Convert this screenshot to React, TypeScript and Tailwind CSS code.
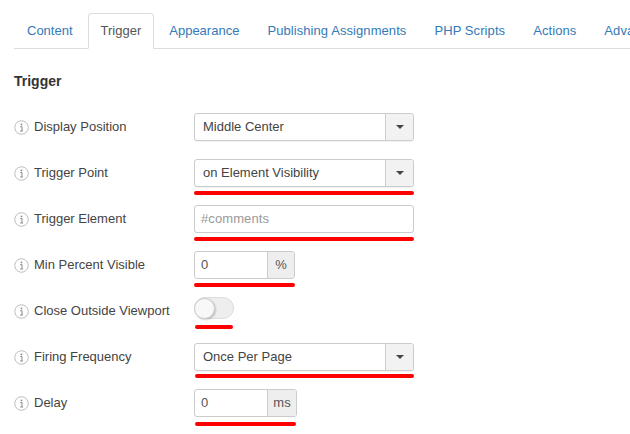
import type { ReactNode } from 'react';

const tabs = ['Content', 'Trigger', 'Appearance', 'Publishing Assignments', 'PHP Scripts', 'Actions', 'Advanced'];

function InfoIcon() {
    return (
        <svg width="15" height="15" viewBox="0 0 15 15" className="shrink-0 mt-[1px]">
            <circle cx="7.5" cy="7.5" r="6.75" fill="none" stroke="#bdbdbd" strokeWidth="1" />
            <circle cx="7.5" cy="4.4" r="0.9" fill="#8a8a8a" />
            <path d="M6.2 6.6 H8 V10.8 M6.1 11 H9" fill="none" stroke="#8a8a8a" strokeWidth="1" />
        </svg>
    );
}

function Row({ label, lineClass, children }: { label: string; lineClass: string; children: ReactNode }) {
    return (
        <div className="flex h-[46px]">
            <div className="w-[180px] h-[28px] flex items-center gap-[5px] text-[13px] text-[#444]">
                <InfoIcon />
                <span>{label}</span>
            </div>
            <div className="flex flex-col">
                {children}
                <div className={`mt-[4px] h-[4px] rounded-[2px] bg-[#fe0000] ${lineClass}`} />
            </div>
        </div>
    );
}

function SelectBox({ value }: { value: string }) {
    return (
        <div className="w-[220px] h-[28px] flex border border-[#ccc] rounded-[3px] bg-white text-[13px] text-[#444] shadow-[0_1px_1px_rgba(0,0,0,0.06)]">
            <div className="flex-1 flex items-center pl-[8px]">{value}</div>
            <div className="w-[28px] flex items-center justify-center bg-[#f2f2f2] border-l border-[#ccc] rounded-r-[3px]">
                <div className="w-0 h-0 border-x-[4px] border-x-transparent border-t-[4px] border-t-[#444]" />
            </div>
        </div>
    );
}

function AddonInput({ value, unit, unitClass }: { value: string; unit: string; unitClass: string }) {
    return (
        <div className="h-[28px] flex border border-[#ccc] rounded-[3px] bg-white text-[13px] text-[#555]">
            <div className="w-[72px] flex items-center pl-[6px]">{value}</div>
            <div className={`flex items-center justify-center bg-[#eee] border-l border-[#ccc] rounded-r-[3px] ${unitClass}`}>{unit}</div>
        </div>
    );
}

export default function App() {
    return (
        <div className="w-[630px] h-[434px] overflow-hidden bg-white font-['Liberation_Sans',Arial,sans-serif]">
            <div className="pt-[13px] px-[14px]">
                {/* Tabs */}
                <div className="flex gap-[2px] h-[36px] border-b border-[#ddd] w-[616px] text-[13px] whitespace-nowrap">
                    {tabs.map((tab, idx) => (
                        tab === 'Trigger' ? (
                            <div key={tab} className="h-[36px] px-[12px] flex items-center border border-[#ddd] border-b-white rounded-t-[4px] bg-white text-[#555]">
                                {tab}
                            </div>
                        ) : (
                            <div key={tab} className={`h-[35px] px-[13px] flex items-center text-[#337ab7] ${idx > 2 ? 'tracking-[0.08px]' : ''}`}>
                                {tab}
                            </div>
                        )
                    ))}
                </div>

                <h3 className="mt-[23px] h-[18px] leading-[18px] text-[14px] font-bold text-[#333]">Trigger</h3>

                <div className="mt-[23px] flex flex-col">
                    <Row label="Display Position" lineClass="hidden">
                        <SelectBox value="Middle Center" />
                    </Row>
                    <Row label="Trigger Point" lineClass="w-[220px]">
                        <SelectBox value="on Element Visibility" />
                    </Row>
                    <Row label="Trigger Element" lineClass="w-[220px]">
                        <div className="w-[220px] h-[28px] flex items-center pl-[6px] border border-[#ccc] rounded-[3px] bg-white text-[13px] tracking-[0.1px] text-[#999]">
                            #comments
                        </div>
                    </Row>
                    <Row label="Min Percent Visible" lineClass="w-[101px]">
                        <AddonInput value="0" unit="%" unitClass="w-[27px]" />
                    </Row>
                    <Row label="Close Outside Viewport" lineClass="w-[38px] ml-[1px] !mt-[3px]">
                        <div className="w-[40px] h-[22px] rounded-full bg-[#eee] border border-[#ddd] mb-[3px]">
                            <div className="w-[21px] h-[21px] -mt-[0.5px] -ml-[1px] rounded-full bg-[#f8f8f8] border border-[#ccc] shadow-[1px_1px_2px_rgba(0,0,0,0.2)]" />
                        </div>
                    </Row>
                    <Row label="Firing Frequency" lineClass="w-[219px] ml-[1px] !mt-[3px]">
                        <SelectBox value="Once Per Page" />
                    </Row>
                    <Row label="Delay" lineClass="w-[101px] ml-[1px] !mt-[5px]">
                        <AddonInput value="0" unit="ms" unitClass="w-[29px]" />
                    </Row>
                </div>
            </div>
        </div>
    );
}
